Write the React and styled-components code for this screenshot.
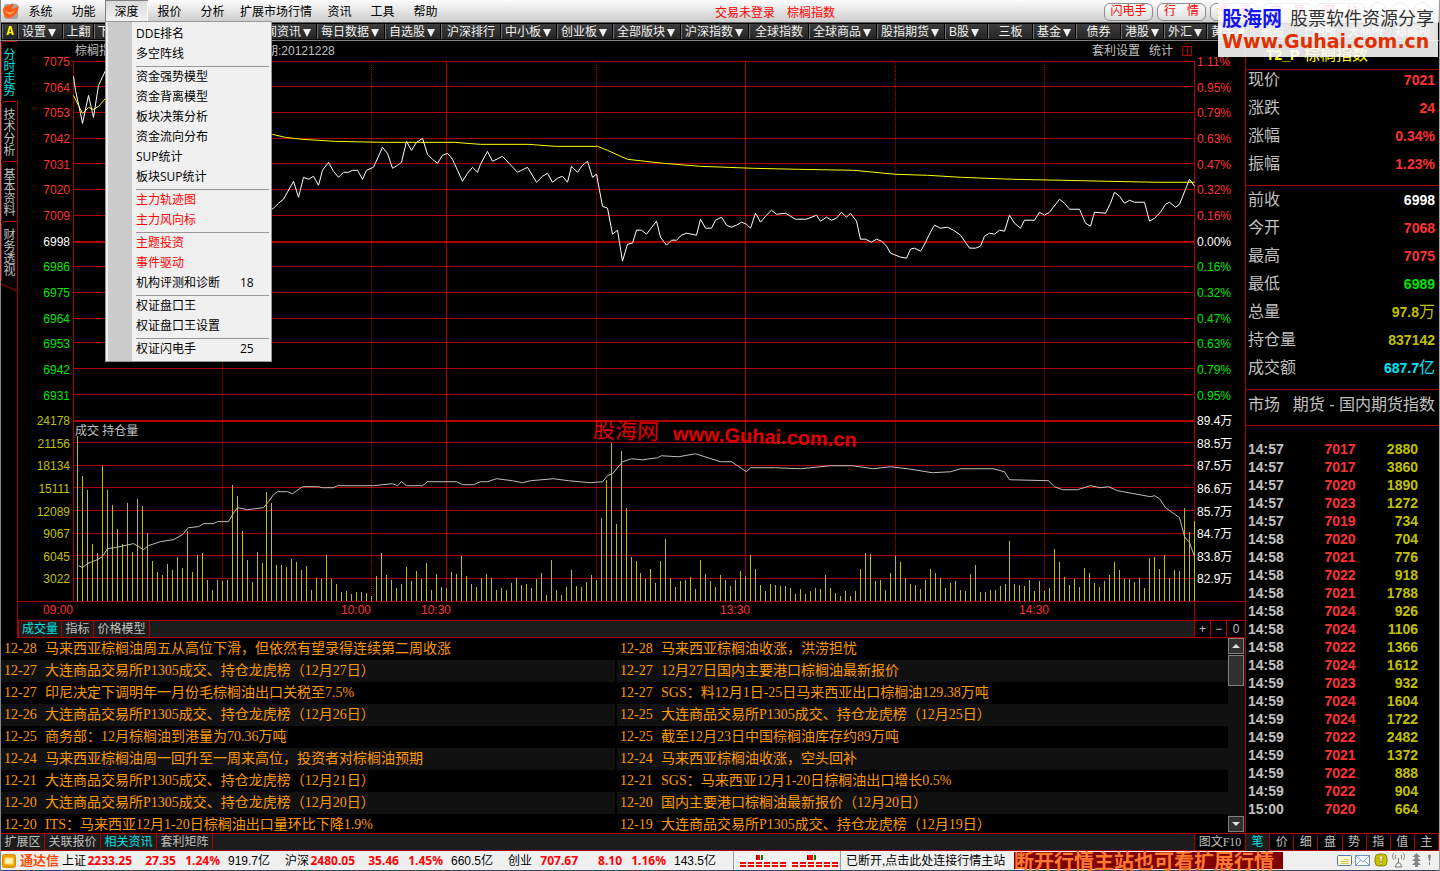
import React from 'react';
import styled, { createGlobalStyle, css } from 'styled-components';

const SANS = `"Liberation Sans", "Noto Sans CJK SC", sans-serif`;
const SERIF = `"Liberation Serif", "Noto Sans CJK SC", serif`;
const MENU_FONT = `"Open Sans", "Noto Sans CJK SC", sans-serif`;
const BOLD_NUM = `"Noto Sans", "Noto Sans CJK SC", sans-serif`;

const RED = '#b00000';
const UP = '#ff3232';
const DOWN = '#00e600';
const GREY = '#c0c0c0';
const GOLD = '#c0c000';
const CYAN = '#00e0e0';

const menus = ['系统', '功能', '深度', '报价', '分析', '扩展市场行情', '资讯', '工具', '帮助'];

const dropdownGroups = [
  [{ label: 'DDE排名' }, { label: '多空阵线' }],
  [
    { label: '资金强势模型' },
    { label: '资金背离模型' },
    { label: '板块决策分析' },
    { label: '资金流向分布' },
    { label: 'SUP统计' },
    { label: '板块SUP统计' }
  ],
  [
    { label: '主力轨迹图', red: true },
    { label: '主力风向标', red: true }
  ],
  [
    { label: '主题投资', red: true },
    { label: '事件驱动', red: true },
    { label: '机构评测和诊断', hotkey: '18' }
  ],
  [{ label: '权证盘口王' }, { label: '权证盘口王设置' }],
  [{ label: '权证闪电手', hotkey: '25' }]
];

const toolsLeft = [
  { label: '设置', arrow: true, width: 45 },
  { label: '上翻', width: 31 },
  { label: '下翻', width: 31 }
];

const tools = [
  { label: '新闻资讯', arrow: true, width: 68 },
  { label: '每日数据', arrow: true, width: 68 },
  { label: '自选股', arrow: true, width: 56 },
  { label: '沪深排行', width: 60 },
  { label: '中小板', arrow: true, width: 56 },
  { label: '创业板', arrow: true, width: 56 },
  { label: '全部版块', arrow: true, width: 68 },
  { label: '沪深指数', arrow: true, width: 68 },
  { label: '全球指数', width: 60 },
  { label: '全球商品', arrow: true, width: 68 },
  { label: '股指期货', arrow: true, width: 68 },
  { label: 'B股', arrow: true, width: 43 },
  { label: '三板', width: 45 },
  { label: '基金', arrow: true, width: 43 },
  { label: '债券', width: 45 },
  { label: '港股', arrow: true, width: 43 },
  { label: '外汇', arrow: true, width: 43 },
  { label: '黄金', arrow: true, width: 43 },
  { label: '美股', width: 45 },
  { label: '上期所', width: 47 },
  { label: '大商所', width: 47 },
  { label: '郑商所', width: 47 }
];

const sideTabs = ['分时走势', '技术分析', '基本资料', '财务透视'];

const priceLabels = ['7075', '7064', '7053', '7042', '7031', '7020', '7009', '6998', '6986', '6975', '6964', '6953', '6942', '6931'];
const percentLabels = ['1.11%', '0.95%', '0.79%', '0.63%', '0.47%', '0.32%', '0.16%', '0.00%', '0.16%', '0.32%', '0.47%', '0.63%', '0.79%', '0.95%'];
const volumeLabels = ['24178', '21156', '18134', '15111', '12089', '9067', '6045', '3022'];
const holdLabels = ['89.4万', '88.5万', '87.5万', '86.6万', '85.7万', '84.7万', '83.8万', '82.9万'];

const pricePoints =
  '73,76 75,90 80,113 82,123 88,95 93,117 98,85 105,70 125,96 150,128 175,150 200,190 230,214 250,222 273,208 278,203 283,199 293,181 298,197 303,177 308,179 313,176 318,185 322,170 328,162 333,171 338,177 343,172 348,172 352,170 357,170 362,179 366,170 373,167 382,147 387,153 392,168 397,165 401,162 406,141 411,150 416,142 422,138 427,154 432,159 437,163 442,155 447,153 452,159 457,170 462,181 467,173 472,167 477,172 480,164 487,151 492,161 502,156 517,172 527,167 536,182 542,176 547,173 552,182 557,178 562,176 567,182 571,166 577,172 582,165 587,161 592,177 596,174 602,206 607,208 612,234 617,230 622,261 627,244 632,243 636,230 641,230 646,234 656,221 660,237 666,245 671,240 676,240 681,235 686,233 696,235 700,219 705,228 711,228 715,220 721,217 726,225 731,227 736,225 741,222 746,224 750,228 755,213 760,222 765,216 771,210 776,214 785,213 795,219 806,219 816,215 820,221 826,217 831,220 836,218 841,212 846,217 850,213 856,221 860,239 865,239 871,242 876,239 881,241 886,246 890,253 900,257 906,258 910,249 914,248 920,251 923,246 930,232 934,225 940,228 947,227 953,230 960,235 969,248 975,248 980,246 984,236 989,233 994,234 999,230 1004,231 1009,215 1014,223 1020,228 1024,220 1034,220 1039,212 1044,215 1049,212 1059,199 1064,203 1069,209 1079,209 1085,223 1090,226 1094,212 1105,213 1110,203 1114,192 1119,196 1124,203 1129,200 1134,202 1144,202 1149,221 1154,218 1160,212 1165,204 1169,202 1175,207 1179,204 1189,179 1194,186';
const averagePoints =
  '73,95 78,105 82,113 88,107 93,109 98,106 105,98 160,104 220,122 272,134 285,137 302,139 335,141 384,142 454,142 480,144 528,144 555,146 597,146 607,150 627,159 645,161 663,163 700,166 753,168 798,169 853,170 895,174 927,175 960,177 1012,179 1062,180 1107,181 1157,182 1194,182';
const holdPoints =
  '78,566 82,568 87,564 92,562 97,560 102,557 107,549 115,548 133,544 143,550 148,546 160,542 173,540 182,535 188,528 198,527 203,524 213,524 217,522 228,522 232,515 237,508 247,510 263,508 268,502 273,495 277,492 287,492 292,494 302,487 318,487 322,488 333,488 337,486 373,486 392,484 397,486 401,482 406,486 422,486 427,482 456,482 462,485 473,485 480,482 487,482 496,479 512,481 522,483 530,481 553,479 568,481 590,483 602,482 607,476 612,474 622,462 631,459 642,460 657,458 661,456 678,457 695,454 720,462 731,462 746,472 750,468 775,468 800,469 830,466 852,466 873,469 890,467 907,469 932,473 950,472 960,469 993,469 1004,472 1009,480 1048,481 1054,487 1062,490 1077,490 1090,486 1100,488 1108,487 1117,491 1150,497 1154,496 1159,499 1165,508 1179,518 1184,537 1189,543 1194,557';

// one bar per minute
const volumes = [
  165, 125, 111, 57, 48, 135, 111, 96, 72, 57, 98, 49, 102, 95, 68, 40, 29, 26, 37, 31, 44, 33, 70, 29, 46, 48, 21, 11, 21, 20, 21, 116, 105, 70, 41,
  19, 49, 38, 109, 98, 36, 36, 34, 42, 39, 31, 35, 11, 23, 22, 46, 22, 17, 9, 10, 7, 9, 9, 8, 5, 25, 48, 26, 21, 13, 17, 34, 20, 30, 22, 38, 11, 27,
  14, 13, 29, 27, 45, 25, 17, 14, 23, 27, 23, 11, 13, 11, 18, 23, 16, 17, 13, 22, 28, 6, 41, 11, 6, 14, 31, 15, 14, 19, 26, 21, 83, 121, 158, 77, 150,
  93, 44, 40, 28, 22, 32, 18, 40, 62, 23, 14, 20, 21, 24, 12, 41, 27, 20, 14, 26, 21, 15, 21, 30, 25, 46, 32, 16, 10, 17, 16, 15, 15, 13, 7, 12, 7, 10,
  13, 12, 26, 13, 8, 5, 10, 5, 10, 32, 48, 47, 20, 21, 11, 28, 45, 39, 23, 17, 16, 12, 21, 32, 28, 23, 13, 18, 20, 11, 10, 27, 36, 9, 9, 11, 11, 15,
  17, 60, 17, 16, 15, 21, 10, 20, 10, 13, 52, 39, 24, 16, 22, 14, 33, 28, 18, 14, 20, 26, 39, 31, 22, 22, 19, 23, 13, 43, 44, 32, 46, 23, 31, 30, 93,
  69, 80
];

const newsLeft = [
  ['12-28', '马来西亚棕榈油周五从高位下滑，但依然有望录得连续第二周收涨'],
  ['12-27', '大连商品交易所P1305成交、持仓龙虎榜（12月27日）'],
  ['12-27', '印尼决定下调明年一月份毛棕榈油出口关税至7.5%'],
  ['12-26', '大连商品交易所P1305成交、持仓龙虎榜（12月26日）'],
  ['12-25', '商务部：12月棕榈油到港量为70.36万吨'],
  ['12-24', '马来西亚棕榈油周一回升至一周来高位，投资者对棕榈油预期'],
  ['12-21', '大连商品交易所P1305成交、持仓龙虎榜（12月21日）'],
  ['12-20', '大连商品交易所P1305成交、持仓龙虎榜（12月20日）'],
  ['12-20', 'ITS：马来西亚12月1-20日棕榈油出口量环比下降1.9%']
];
const newsRight = [
  ['12-28', '马来西亚棕榈油收涨，洪涝担忧'],
  ['12-27', '12月27日国内主要港口棕榈油最新报价'],
  ['12-27', 'SGS：料12月1日-25日马来西亚出口棕榈油129.38万吨'],
  ['12-25', '大连商品交易所P1305成交、持仓龙虎榜（12月25日）'],
  ['12-25', '截至12月23日中国棕榈油库存约89万吨'],
  ['12-24', '马来西亚棕榈油收涨，空头回补'],
  ['12-21', 'SGS：马来西亚12月1-20日棕榈油出口增长0.5%'],
  ['12-20', '国内主要港口棕榈油最新报价（12月20日）'],
  ['12-19', '大连商品交易所P1305成交、持仓龙虎榜（12月19日）']
];

const quoteTop = [
  { label: '现价', value: '7021', color: UP },
  { label: '涨跌', value: '24', color: UP },
  { label: '涨幅', value: '0.34%', color: UP },
  { label: '振幅', value: '1.23%', color: UP }
];
const quoteBottom = [
  { label: '前收', value: '6998', color: '#ffffff' },
  { label: '今开', value: '7068', color: UP },
  { label: '最高', value: '7075', color: UP },
  { label: '最低', value: '6989', color: DOWN },
  { label: '总量', value: '97.8', unit: '万', color: GOLD },
  { label: '持仓量', value: '837142', color: GOLD },
  { label: '成交额', value: '687.7', unit: '亿', color: '#00e6ff' }
];

const trades = [
  ['14:57', '7017', '2880'],
  ['14:57', '7017', '3860'],
  ['14:57', '7020', '1890'],
  ['14:57', '7023', '1272'],
  ['14:57', '7019', '734'],
  ['14:58', '7020', '704'],
  ['14:58', '7021', '776'],
  ['14:58', '7022', '918'],
  ['14:58', '7021', '1788'],
  ['14:58', '7024', '926'],
  ['14:58', '7024', '1106'],
  ['14:58', '7022', '1366'],
  ['14:58', '7024', '1612'],
  ['14:59', '7023', '932'],
  ['14:59', '7024', '1604'],
  ['14:59', '7024', '1722'],
  ['14:59', '7022', '2482'],
  ['14:59', '7021', '1372'],
  ['14:59', '7022', '888'],
  ['14:59', '7022', '904'],
  ['15:00', '7020', '664']
];

const indexes = [
  { name: '上证', value: '2233.25', change: '27.35', percent: '1.24%', amount: '919.7亿' },
  { name: '沪深', value: '2480.05', change: '35.46', percent: '1.45%', amount: '660.5亿' },
  { name: '创业', value: '707.67', change: '8.10', percent: '1.16%', amount: '143.5亿' }
];

const labelColor = (index) => {
  if (index === 7) return '#ffffff';
  return index < 7 ? UP : DOWN;
};

const AppLogo = () => (
  <svg width="16" height="17" viewBox="0 0 16 17" aria-hidden="true">
    <rect x="1" y="1" width="14" height="15" rx="2" fill="#a9a4a4" />
    <path d="M0 6C2 2 7 3 10 0c1 2 0 4-2 5 3 2 5-1 8-2-1 6-5 12-10 12C1 15 0 10 0 6z" fill="#ff5a14" />
    <path d="M2 7c2 3 6 3 10 0-2 5-8 7-10 0z" fill="#ffa04a" />
  </svg>
);

const Chart = () => {
  const rows = Array.from({ length: 14 }, (_, i) => 61 + Math.floor((i * 360) / 14));
  const volumeRows = Array.from({ length: 8 }, (_, i) => 421 + Math.floor((i * 181) / 8));
  return (
    <ChartSvg viewBox="73 61 1122 542" preserveAspectRatio="none" shapeRendering="crispEdges" role="img" aria-label="分时走势图">
      <g fill={RED}>
        {[...rows, ...volumeRows].map((y) => (
          <rect key={y} x="73" y={y} width="1122" height={y === 241 || y === 421 ? 2 : 1} />
        ))}
        <rect x="73" y="602" width="1122" height="1" />
        {[73, 446, 745, 1194].map((x) => (
          <rect key={x} x={x} y="61" width="1" height="542" />
        ))}
      </g>
      {[222, 371, 596, 895, 1044].map((x) => (
        <line key={x} x1={x + 0.5} x2={x + 0.5} y1="63" y2="602" stroke="#c80000" strokeDasharray="1 1" />
      ))}
      <g fill={GOLD}>
        {volumes.map((height, i) => (
          <rect key={i} x={77 + Math.round((i * 1117) / 224)} y={602 - height} width="1" height={height} />
        ))}
      </g>
      <g fill="none" transform="translate(0.5 0.5)">
        <polyline points={holdPoints} stroke={GREY} />
        <polyline points={averagePoints} stroke="#ffff00" />
        <polyline points={pricePoints} stroke="#ffffff" />
      </g>
    </ChartSvg>
  );
};

const Meter = ({ mark }) => (
  <svg width="50" height="16" viewBox="0 0 50 16" shapeRendering="crispEdges" aria-hidden="true">
    <path d="M.5 1.500h49v6H.5zM12.500 1.500v6M37.500 1.500v6" fill="none" stroke="#fff" />
    <rect x={20 - mark} y="2" width={4 + mark * 2} height="5" fill="#f00" />
    <rect x={20 - mark} y="2" width="1" height="5" fill="#800000" />
    <rect x={25 + mark} y="2" width="2" height="5" fill="#008000" />
    {[4, 12, 20, 28, 36, 44].map((x) => (
      <path key={x} d={`M${x} 9h6v2h-6zM${x} 12h6v2h-6z`} fill="#f00" />
    ))}
  </svg>
);

const TrayIcons = () => (
  <svg width="98" height="17" viewBox="0 0 98 17" aria-hidden="true">
    <rect x=".5" y="3.500" width="14" height="10" rx="1" fill="#fffbd0" stroke="#4a78b8" />
    <path d="M7 7.500h5M4 9.500h8M4 11.500h8" stroke="#d8c850" />
    <rect x="18.500" y="3.500" width="14" height="10" fill="#f4f8ff" stroke="#6f92bd" />
    <path d="M19 4l7 6 6-6M19 13l5-5M32 13l-5-5" fill="none" stroke="#8ba7ca" />
    <rect x="38" y="2" width="12" height="12" rx="4" fill="#c9c400" stroke="#8c8a00" />
    <path d="M44 3.500l3 3h-2v3h-2v-3h-2zM43 10.500h2v2h-2z" fill="#fffbd0" stroke="#8c7a00" strokeWidth=".5" />
    <path d="M61.500 6v5M60 11h3l2 4h-7zM59 3c-1 1-1 3 0 4M64 3c1 1 1 3 0 4M57 1c-2 2-2 5 0 7M66 1c2 2 2 5 0 7" fill="none" stroke="#807c70" />
    <path d="M79.500 1l4 4h-8zM78 5h3v1l3 3h-9l3-3zM78 9h3v1l3 3h-9l3-3zM78 13h3v2h-3z" fill="#858585" />
    <path d="M91 4c0-2 3-2 3 0l-1 5h-1zM92 10h1v3h-1z" fill="#858585" />
  </svg>
);

const NewsColumn = ({ items }) => (
  <NewsList>
    {items.map(([date, title], index) => (
      <NewsItem key={index}>
        <NewsDate>{date}</NewsDate>
        <NewsLink href="#news">{title}</NewsLink>
      </NewsItem>
    ))}
  </NewsList>
);

const Quote = ({ rows }) => (
  <QuoteList>
    {rows.map((row) => (
      <QuoteRow key={row.label}>
        <dt>{row.label}</dt>
        <QuoteValue $color={row.color}>
          {row.value}
          {row.unit && <Unit>{row.unit}</Unit>}
        </QuoteValue>
      </QuoteRow>
    ))}
  </QuoteList>
);

const App = () => {
  return (
    <>
      <GlobalStyle />
      <Page>
        <MenuBar>
          <AppLogo />
          <MenuItems>
            {menus.map((menu) => (
              <MenuHolder key={menu}>
                <MenuButton type="button" $active={menu === '深度'}>
                  {menu}
                </MenuButton>
                {menu === '深度' && (
                  <Dropdown>
                    {dropdownGroups.map((group, index) => (
                      <DropdownGroup key={index}>
                        {group.map((item) => (
                          <DropdownItem key={item.label} type="button" $red={item.red}>
                            <span>{item.label}</span>
                            {item.hotkey && <span>{item.hotkey}</span>}
                          </DropdownItem>
                        ))}
                      </DropdownGroup>
                    ))}
                  </Dropdown>
                )}
              </MenuHolder>
            ))}
          </MenuItems>
          <LoginState>
            <span>交易未登录</span>
            <span>棕榈指数</span>
          </LoginState>
          <PillGroup>
            <Pill type="button">闪电手</Pill>
            {['行情', '资讯', '交易', '网站'].map((text) => (
              <Pill key={text} type="button" $spread>
                <span>{text[0]}</span>
                <span>{text[1]}</span>
              </Pill>
            ))}
            <RoundButton type="button" aria-label="最小化" />
            <RoundButton type="button" aria-label="还原" />
            <RoundButton type="button" aria-label="关闭" />
          </PillGroup>
        </MenuBar>

        <Toolbar>
          <ToolButton type="button" $width={16} $letter>
            A
          </ToolButton>
          {toolsLeft.map((tool) => (
            <ToolButton key={tool.label} type="button" $width={tool.width} $arrow={tool.arrow}>
              {tool.label}
              {tool.arrow && <Arrow />}
            </ToolButton>
          ))}
          <ToolGap />
          {tools.map((tool) => (
            <ToolButton key={tool.label} type="button" $width={tool.width} $arrow={tool.arrow}>
              {tool.label}
              {tool.arrow && <Arrow />}
            </ToolButton>
          ))}
        </Toolbar>

        <Workspace>
          <MainColumn>
            <ChartArea>
              <SideTabs>
                {sideTabs.map((tab, index) => (
                  <SideTab key={tab} type="button" $active={index === 0}>
                    <span>{tab}</span>
                  </SideTab>
                ))}
                <SideEnd>
                  <svg width="17" height="8" viewBox="0 0 17 8" aria-hidden="true">
                    <path d="M0 .5h2l6 3 9 4" fill="none" stroke={RED} />
                  </svg>
                </SideEnd>
              </SideTabs>
              <ChartColumn>
                <ChartBody>
                  <Axis $left>
                    <AxisGroup $grow={360}>
                      {priceLabels.map((label, index) => (
                        <AxisLabel key={index} $color={labelColor(index)}>
                          {label}
                        </AxisLabel>
                      ))}
                    </AxisGroup>
                    <AxisGroup $grow={181}>
                      {volumeLabels.map((label) => (
                        <AxisLabel key={label} $color={GOLD}>
                          {label}
                        </AxisLabel>
                      ))}
                    </AxisGroup>
                  </Axis>
                  <Plot>
                    <PlotHeader>
                      <PlotName>棕榈指数</PlotName>
                      <span>日期:20121228</span>
                      <PlotActions>
                        <TextButton type="button">套利设置</TextButton>
                        <TextButton type="button">统计</TextButton>
                        <svg width="10" height="11" viewBox="0 0 10 11" shapeRendering="crispEdges" aria-hidden="true">
                          <path d="M.5.5h9v9h-9zM5.500.5v9" fill="none" stroke={RED} />
                        </svg>
                      </PlotActions>
                    </PlotHeader>
                    <PlotCanvas>
                      <Chart />
                      <VolumeTitle>成交 持仓量</VolumeTitle>
                      <ChartMark>
                        <ChartMarkName>股海网</ChartMarkName>
                        <span>www.Guhai.com.cn</span>
                      </ChartMark>
                    </PlotCanvas>
                  </Plot>
                  <Axis>
                    <AxisGroup $grow={360}>
                      {percentLabels.map((label, index) => (
                        <AxisLabel key={index} $color={labelColor(index)}>
                          {label}
                        </AxisLabel>
                      ))}
                    </AxisGroup>
                    <AxisGroup $grow={181}>
                      {holdLabels.map((label) => (
                        <AxisLabel key={label} $color="#ffffff">
                          {label}
                        </AxisLabel>
                      ))}
                    </AxisGroup>
                  </Axis>
                </ChartBody>
                <TimeAxis>
                  <span>09:00</span>
                  <span>10:00</span>
                  <span>10:30</span>
                  <span>13:30</span>
                  <span>14:30</span>
                  <span />
                  <TimeCorner />
                </TimeAxis>
                <TabStrip $top>
                  <StripTab type="button" $active $width={43}>
                    成交量
                  </StripTab>
                  <StripTab type="button" $width={32}>
                    指标
                  </StripTab>
                  <StripTab type="button" $width={56}>
                    价格模型
                  </StripTab>
                  <StripFill />
                  <ZoomButton type="button">+</ZoomButton>
                  <ZoomButton type="button">−</ZoomButton>
                  <ZoomButton type="button" $wide>
                    0
                  </ZoomButton>
                </TabStrip>
              </ChartColumn>
            </ChartArea>

            <News>
              <NewsColumn items={newsLeft} />
              <NewsColumn items={newsRight} />
              <ScrollBar>
                <ScrollButton type="button" aria-label="向上">
                  <Triangle $up />
                </ScrollButton>
                <ScrollThumb />
                <ScrollButton type="button" aria-label="向下">
                  <Triangle />
                </ScrollButton>
              </ScrollBar>
            </News>

            <TabStrip>
              <StripTab type="button" $width={44}>
                扩展区
              </StripTab>
              <StripTab type="button" $width={56}>
                关联报价
              </StripTab>
              <StripTab type="button" $active $width={56}>
                相关资讯
              </StripTab>
              <StripTab type="button" $width={56}>
                套利矩阵
              </StripTab>
              <StripFill />
              <F10Button type="button">图文F10</F10Button>
            </TabStrip>
          </MainColumn>

          <QuotePanel>
            <QuoteTitle>
              <b>T2_P</b> 棕榈指数
            </QuoteTitle>
            <Quote rows={quoteTop} />
            <Quote rows={quoteBottom} />
            <Market>
              <span>市场</span>
              <span>期货 - 国内期货指数</span>
            </Market>
            <Trades>
              <tbody>
                {trades.map(([time, price, volume], index) => (
                  <tr key={index}>
                    <TradeCell $color={GREY}>{time}</TradeCell>
                    <TradeCell $color={UP} $right>
                      {price}
                    </TradeCell>
                    <TradeCell $color={GOLD} $right>
                      {volume}
                    </TradeCell>
                  </tr>
                ))}
              </tbody>
            </Trades>
            <PanelTabs>
              {['笔', '价', '细', '盘', '势', '指', '值', '主'].map((tab, index) => (
                <PanelTab key={tab} type="button" $active={index === 0}>
                  {tab}
                </PanelTab>
              ))}
            </PanelTabs>
          </QuotePanel>
        </Workspace>

        <StatusBar>
          <Brand>
            <svg width="14" height="14" viewBox="0 0 14 14" aria-hidden="true">
              <rect x=".5" y=".5" width="13" height="13" rx="2" fill="#f0a000" stroke="#d88a00" />
              <rect x="3" y="4" width="8" height="6" fill="#fff3c0" stroke="#ffd75a" />
            </svg>
            通达信
          </Brand>
          {indexes.map((item) => (
            <IndexGroup key={item.name}>
              <span>{item.name}</span>
              <IndexNumber>{item.value}</IndexNumber>
              <IndexNumber>{item.change}</IndexNumber>
              <IndexNumber>{item.percent}</IndexNumber>
              <IndexAmount>{item.amount}</IndexAmount>
            </IndexGroup>
          ))}
          <Meters>
            <Meter mark={0} />
            <Meter mark={1} />
          </Meters>
          <ConnectButton type="button">已断开,点击此处连接行情主站</ConnectButton>
          <Ticker>断开行情主站也可看扩展行情</Ticker>
          <Tray>
            <TrayIcons />
          </Tray>
        </StatusBar>

        <SiteMark>
          <SiteMarkTop>
            <SiteName>股海网</SiteName>
            <SiteSlogan>股票软件资源分享</SiteSlogan>
          </SiteMarkTop>
          <SiteUrl>Www.Guhai.com.cn</SiteUrl>
        </SiteMark>
      </Page>
    </>
  );
};

export default App;

const GlobalStyle = createGlobalStyle`
  *, *::before {
    box-sizing: border-box;
  }
  body {
    margin: 0;
    background: #000;
    font-family: ${SANS};
    font-size: 12px;
  }
  button {
    margin: 0;
    padding: 0;
    border: none;
    background: none;
    color: inherit;
    font: inherit;
    white-space: nowrap;
    cursor: pointer;
  }
  a {
    color: inherit;
    text-decoration: none;
  }
  dl, dt, dd, ul {
    margin: 0;
    padding: 0;
    list-style: none;
  }
`;

const Page = styled.div`
  position: relative;
  display: flex;
  flex-direction: column;
  min-height: 100vh;
  border-left: 1px solid #85858c;
  border-right: 1px solid #a0a0a0;
  color: ${GREY};
  overflow: hidden;
`;

const MenuBar = styled.header`
  display: flex;
  align-items: center;
  height: 22px;
  padding-left: 2px;
  background: linear-gradient(#fdfdfd, #cccccc);
  color: #000;
`;

const MenuItems = styled.nav`
  display: flex;
  flex: 1;
  height: 22px;
`;

const MenuHolder = styled.div`
  position: relative;
`;

const MenuButton = styled.button`
  min-width: 43px;
  height: 22px;
  padding: 2px 6px 0;
  line-height: 20px;
  ${(props) =>
    props.$active &&
    css`
      background: linear-gradient(#d8d8d8, #f4f4f4);
      box-shadow: inset 1px 1px 0 #808080, inset -1px 0 0 #fff;
    `}
`;

const Dropdown = styled.div`
  position: absolute;
  z-index: 5;
  top: 21px;
  left: 0;
  width: 167px;
  padding: 2px;
  border: 1px solid #979797;
  background: linear-gradient(to right, #f0f0f0 2px, #cbcbcb 2px, #cbcbcb 26px, #f0f0f0 26px);
  font-family: ${MENU_FONT};
`;

const DropdownGroup = styled.div`
  & + &::before {
    content: '';
    display: block;
    height: 3px;
    margin-left: 28px;
    border-bottom: 1px solid #979797;
  }
`;

const DropdownItem = styled.button`
  display: grid;
  grid-template-columns: 104px auto;
  width: 100%;
  height: 20px;
  padding-left: 28px;
  line-height: 20px;
  text-align: left;
  color: ${(props) => (props.$red ? '#ff0000' : '#000000')};
`;

const LoginState = styled.div`
  display: flex;
  gap: 12px;
  margin-right: 269px;
  color: #ff0000;
`;

const PillGroup = styled.div`
  display: flex;
  align-items: center;
  gap: 4px;
  width: 335px;
`;

const Pill = styled.button`
  display: flex;
  justify-content: ${(props) => (props.$spread ? 'space-between' : 'center')};
  width: 49px;
  height: 18px;
  margin-top: 2px;
  padding: 0 6px;
  border: 1px solid #8c8c8c;
  border-radius: 6px;
  background: linear-gradient(#ffffff, #dcdcdc);
  line-height: 15px;
  color: #ff0000;
`;

const RoundButton = styled.button`
  width: 18px;
  height: 18px;
  border: 1px solid #707070;
  border-radius: 50%;
`;

const Toolbar = styled.div`
  display: flex;
  height: 19px;
  padding: 1px 0 1px 1px;
  border-top: 1px solid #606060;
  border-bottom: 1px solid #808080;
  background: #000;
`;

const ToolButton = styled.button`
  display: flex;
  align-items: center;
  justify-content: ${(props) => (props.$arrow ? 'flex-start' : 'center')};
  gap: 2px;
  flex: none;
  width: ${(props) => props.$width}px;
  padding-top: 2px;
  padding-left: ${(props) => (props.$arrow ? 3 : 0)}px;
  border-left: 1px solid #707070;
  border-right: 1px solid #000;
  background: linear-gradient(#3c3c3c, #262626);
  line-height: 13px;
  color: #f0f0f0;
  ${(props) =>
    props.$letter &&
    css`
      font-family: "Liberation Mono", monospace;
      font-weight: bold;
      color: #ffff00;
    `}
`;

const ToolGap = styled.div`
  flex: none;
  width: 124px;
`;

const Arrow = styled.i`
  border: 4px solid transparent;
  border-top: 8px solid #f0f0f0;
  border-bottom: none;
`;

const Workspace = styled.main`
  display: flex;
  flex: 1;
`;

const MainColumn = styled.div`
  display: flex;
  flex-direction: column;
  flex: 1;
  min-width: 0;
`;

const ChartArea = styled.section`
  display: flex;
  flex: 1;
`;

const SideTabs = styled.div`
  display: flex;
  flex-direction: column;
  width: 17px;
`;

const SideTab = styled.button`
  display: flex;
  justify-content: center;
  height: 60px;
  padding: 7px 0 0;
  border-top: 1px solid ${RED};
  border-left: 1px solid ${RED};
  border-right: 1px solid ${(props) => (props.$active ? 'transparent' : RED)};
  border-top-left-radius: 4px;
  line-height: 12px;
  color: ${(props) => (props.$active ? CYAN : GREY)};

  span {
    width: 12px;
    white-space: normal;
    word-break: break-all;
  }
`;

const SideEnd = styled.div`
  flex: 1;
  border-right: 1px solid ${RED};
`;

const ChartColumn = styled.div`
  display: flex;
  flex-direction: column;
  flex: 1;
  min-width: 0;
`;

const ChartBody = styled.div`
  display: flex;
  flex: 1;
`;

const Axis = styled.div`
  display: flex;
  flex-direction: column;
  width: ${(props) => (props.$left ? 55 : 50)}px;
  padding: ${(props) => (props.$left ? '13px 3px 8px 0' : '13px 0 8px 2px')};
  text-align: ${(props) => (props.$left ? 'right' : 'left')};
`;

const AxisGroup = styled.div`
  display: grid;
  grid-auto-rows: minmax(0, 1fr);
  flex: ${(props) => props.$grow} 0 0;
`;

const AxisLabel = styled.span`
  line-height: 16px;
  white-space: nowrap;
  color: ${(props) => props.$color};
`;

const Plot = styled.div`
  display: flex;
  flex-direction: column;
  flex: 1;
  min-width: 0;
`;

const PlotHeader = styled.div`
  display: flex;
  height: 20px;
  padding-left: 2px;
  line-height: 20px;
`;

const PlotName = styled.span`
  width: 179px;
`;

const PlotActions = styled.div`
  display: flex;
  align-items: center;
  gap: 9px;
  margin-left: auto;
  padding-right: 3px;
`;

const TextButton = styled.button`
  line-height: 20px;
`;

const PlotCanvas = styled.div`
  position: relative;
  flex: 1;
`;

const ChartSvg = styled.svg`
  position: absolute;
  inset: 0;
  width: 100%;
  height: 100%;
`;

const VolumeTitle = styled.span`
  position: absolute;
  top: 67%;
  left: 2px;
  line-height: 16px;
`;

const ChartMark = styled.div`
  position: absolute;
  top: 66%;
  left: 46%;
  display: flex;
  align-items: center;
  gap: 14px;
  padding: 3px 0 0 4px;
  font-size: 20px;
  font-weight: bold;
  line-height: 28px;
  color: #e00000;
  transform: rotate(2deg);
`;

const ChartMarkName = styled.span`
  font-size: 22px;
  font-weight: normal;
`;

const TimeAxis = styled.div`
  display: grid;
  grid-template-columns: 55px 298fr 80fr 299fr 299fr 145fr 51px;
  height: 19px;
  border-top: 1px solid ${RED};
  margin-top: -1px;
  line-height: 17px;
  text-align: right;
  color: ${UP};
`;

const TimeCorner = styled.span`
  border-left: 1px solid ${RED};
`;

const TabStrip = styled.div`
  display: flex;
  height: 18px;
  border-top: 1px solid ${RED};
  border-bottom: 1px solid ${RED};
  border-left: ${(props) => (props.$top ? 1 : 0)}px solid ${RED};
`;

const StripTab = styled.button`
  width: ${(props) => props.$width}px;
  border-right: 1px solid ${RED};
  background: #1c1c1c;
  line-height: 17px;
  color: ${(props) => (props.$active ? CYAN : GREY)};
`;

const StripFill = styled.div`
  flex: 1;
  background: #1c1c1c;
`;

const ZoomButton = styled.button`
  width: ${(props) => (props.$wide ? 19 : 16)}px;
  border-left: 1px solid ${RED};
  line-height: 16px;
`;

const F10Button = styled.button`
  width: 51px;
  border-left: 1px solid ${RED};
  font-family: ${SERIF};
  line-height: 17px;
`;

const News = styled.section`
  display: grid;
  grid-template-columns: 614fr 613fr 17px;
  grid-template-rows: 100%;
  height: 195px;
  overflow: hidden;
`;

const NewsList = styled.ul`
  font-family: ${SERIF};
  font-size: 14px;
  color: #ff9900;

  & + & {
    border-left: 2px solid #000;
  }
`;

const NewsItem = styled.li`
  display: flex;
  height: 22px;
  padding-left: 3px;
  line-height: 22px;
  white-space: nowrap;

  &:nth-child(even) {
    background: #111;
  }
`;

const NewsDate = styled.span`
  width: 41px;
`;

const NewsLink = styled.a`
  &:hover {
    text-decoration: underline;
  }
`;

const ScrollBar = styled.div`
  display: flex;
  flex-direction: column;
  gap: 1px;
  padding: 0 1px 1px 0;
  background: #111;
`;

const ScrollButton = styled.button`
  display: flex;
  align-items: center;
  justify-content: center;
  height: 16px;
  border: 1px solid #808080;
  background: #303030;

  &:last-child {
    margin-top: auto;
  }
`;

const ScrollThumb = styled.div`
  height: 31px;
  border: 1px solid #808080;
  background: #303030;
`;

const Triangle = styled.i`
  border: 4px solid transparent;
  ${(props) => (props.$up ? 'border-bottom: 4px solid #e0e0e0; border-top: none;' : 'border-top: 4px solid #e0e0e0; border-bottom: none;')}
`;

const QuotePanel = styled.aside`
  display: flex;
  flex-direction: column;
  width: 194px;
  border-left: 1px solid ${RED};
`;

const QuoteTitle = styled.h1`
  height: 29px;
  margin: 0;
  padding-left: 20px;
  border-bottom: 1px solid ${RED};
  font-size: 16px;
  font-weight: normal;
  line-height: 28px;
  white-space: nowrap;
  color: #ffff00;

  b {
    font-size: 14px;
  }
`;

const QuoteList = styled.dl`
  display: flex;
  flex-direction: column;
  gap: 8px;
  padding: 0 4px 11px 2px;
  border-bottom: 1px solid ${RED};
  font-size: 16px;

  & + & {
    padding-top: 4px;
  }
`;

const QuoteRow = styled.div`
  display: flex;
  justify-content: space-between;
  height: 20px;
  line-height: 20px;
`;

const QuoteValue = styled.dd`
  font-size: 14px;
  font-weight: bold;
  color: ${(props) => props.$color};
`;

const Unit = styled.span`
  font-size: 16px;
  font-weight: normal;
`;

const Market = styled.div`
  display: flex;
  justify-content: space-between;
  height: 36px;
  padding: 0 4px 0 2px;
  border-bottom: 1px solid ${RED};
  font-size: 16px;
  line-height: 29px;
  white-space: nowrap;
`;

const Trades = styled.table`
  width: 172px;
  margin-top: 14px;
  border-collapse: collapse;
  table-layout: fixed;
  font-size: 14px;
  font-weight: bold;
`;

const TradeCell = styled.td`
  height: 18px;
  padding: 0 0 0 2px;
  line-height: 18px;
  text-align: ${(props) => (props.$right ? 'right' : 'left')};
  color: ${(props) => props.$color};

  &:nth-child(2) {
    padding-right: 5px;
  }
`;

const PanelTabs = styled.div`
  display: grid;
  grid-template-columns: repeat(8, 1fr);
  height: 18px;
  margin-top: auto;
  border-top: 1px solid ${RED};
  border-bottom: 1px solid ${RED};
`;

const PanelTab = styled.button`
  border-right: 1px solid ${RED};
  background: ${(props) => (props.$active ? '#1c1c1c' : 'none')};
  line-height: 17px;
  color: ${(props) => (props.$active ? CYAN : GREY)};
`;

const StatusBar = styled.footer`
  display: flex;
  align-items: center;
  height: 20px;
  padding-left: 1px;
  border-bottom: 1px solid #3a4660;
  background: #f0f0f0;
  color: #000;
  white-space: nowrap;
`;

const Brand = styled.strong`
  display: flex;
  align-items: center;
  gap: 4px;
  width: 60px;
  font-size: 13px;
  line-height: 18px;
  color: #ff4a00;
`;

const IndexGroup = styled.div`
  display: grid;
  grid-template-columns: 25px 45px 44px 44px 50px;
  width: 223px;
  line-height: 18px;
`;

const IndexNumber = styled.b`
  font-family: ${BOLD_NUM};
  text-align: right;
  color: #ff0000;
`;

const IndexAmount = styled.span`
  text-align: right;
`;

const Meters = styled.div`
  display: flex;
  align-items: center;
  gap: 2px;
  height: 19px;
  margin-left: 2px;
  padding: 0 2px;
  border-left: 1px solid #a0a0a0;
  border-right: 1px solid #a0a0a0;
`;

const ConnectButton = styled.button`
  width: 173px;
  padding-left: 5px;
  line-height: 18px;
  text-align: left;
`;

const Ticker = styled.div`
  width: 269px;
  height: 17px;
  background: #800000;
  font-size: 20px;
  font-weight: bold;
  line-height: 20px;
  color: #ff7a30;
`;

const Tray = styled.div`
  display: flex;
  margin-left: auto;
  padding-right: 4px;
`;

const SiteMark = styled.div`
  position: absolute;
  z-index: 6;
  top: 1px;
  right: 1px;
  width: 220px;
  height: 56px;
  padding: 6px 4px 0;
  background: rgba(255, 255, 255, 0.88);
  white-space: nowrap;
`;

const SiteMarkTop = styled.div`
  display: flex;
  align-items: center;
  justify-content: space-between;
  height: 24px;
`;

const SiteName = styled.strong`
  font-size: 20px;
  line-height: 24px;
  color: #1414f0;
`;

const SiteSlogan = styled.span`
  font-size: 18px;
  line-height: 24px;
  color: #303030;
`;

const SiteUrl = styled.strong`
  display: block;
  font-family: "DejaVu Sans", sans-serif;
  font-size: 19px;
  line-height: 20px;
  color: #e03000;
`;
